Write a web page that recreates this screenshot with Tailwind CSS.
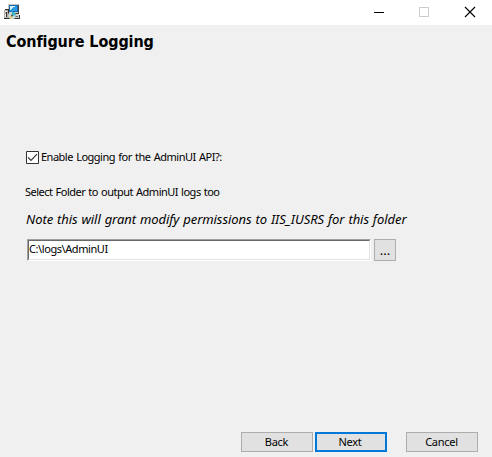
<!DOCTYPE html>
<html lang="en">
<head>
<meta charset="utf-8">
<title>Configure Logging</title>
<script src="https://cdn.jsdelivr.net/npm/@tailwindcss/browser@4"></script>
</head>
<body class="w-[492px] h-[457px] overflow-hidden bg-[#f0f0f0] flex flex-col font-['Noto_Sans',sans-serif] text-[11px] text-black whitespace-nowrap">
<header class="h-[25px] shrink-0 bg-white flex items-start justify-between pl-1">
  <svg class="w-4 h-4 mt-1" viewBox="0 0 16 16" fill="none" shape-rendering="crispEdges">
    <path d="M4 0h11v9H4z" fill="#c8c8c0"/><path d="M14 1h1v9H6V9h8z" fill="#444"/><path d="M5 1h9v7H5z" fill="#1464b4"/><path d="M6 2h7v5H6z" fill="#2b9be0"/><path d="M6 2h5v1H9v1H8v1H7v1H6z" fill="#d8f4ff"/>
    <path d="M8 10h7v4H8z" fill="#d0d0c8"/><path d="M9 14h7v1H9zM15 11h1v4h-1z" fill="#333"/><path d="M11 12h3v1h-3z" fill="#666"/>
    <path d="M0 6h5v9H0z" fill="#b0aca4"/><path d="M1 5h4v1H1zM4 6h1v4H4zM0 14h6v1H0zM2 8h1v5H2z" fill="#333"/><path d="M1 7h2v1H1zM1 10h1v3H1z" fill="#eee"/>
    <g shape-rendering="auto"><circle cx="8" cy="11.5" r="3.7" fill="#c5d8da"/><path d="M8 7.8a3.7 3.7 0 0 1 3.7 3.7H8z" fill="#35b8c8"/><path d="M4.8 13l3.2-1.5v3.7z" fill="#e8d070"/><circle cx="8" cy="11.5" r="1" fill="#555"/></g>
  </svg>
  <svg class="w-[132px] h-[25px]" viewBox="0 0 132 25" fill="none" shape-rendering="crispEdges">
    <path d="M14 12.5h10" stroke="#000"/><path d="M59.5 7.5h9v9h-9z" stroke="#ccc"/><path d="M105 7l10 10M115 7l-10 10" stroke="#000" shape-rendering="auto" stroke-width="1.1"/>
  </svg>
</header>
<main class="flex-1 flex flex-col">
  <h1 class="mt-[5px] ml-[6px] h-6 leading-6 font-['DejaVu_Sans_Condensed','DejaVu_Sans',sans-serif] font-bold text-[16px] tracking-[-0.1px]">Configure Logging</h1>
  <label class="mt-[95px] ml-[26px] h-4 flex items-center">
    <svg class="w-[13px] h-[13px] mr-[2px]" viewBox="0 0 13 13"><path d="M.5.5h12v12H.5z" fill="#fff" stroke="#333"/><path d="M2 6.3L5 9.3l6-6.2" fill="none" stroke="#333" stroke-width="1.2"/></svg>
    <span class="tracking-[-0.5px] [word-spacing:0.9px]">Enable Logging for the AdminUI API?:</span>
  </label>
  <p class="mt-[19px] ml-[25px] h-4 leading-4 tracking-[-0.5px] [word-spacing:0.7px]">Select Folder to output AdminUI logs too</p>
  <p class="mt-[10px] ml-[26px] h-[18px] leading-[18px] italic text-[13px] tracking-[-0.06px] [word-spacing:0.6px]">Note this will grant modify permissions to IIS_IUSRS for this folder</p>
  <div class="mt-[11px] ml-[27px] flex gap-[3px] h-[22px]">
    <div class="w-[344px] bg-white border border-t-[#a0a0a0] border-l-[#a0a0a0] border-r-white border-b-white">
      <div class="h-full border border-t-[#696969] border-l-[#696969] border-r-[#e3e3e3] border-b-[#e3e3e3] leading-4 tracking-[-0.42px]">C:\logs\AdminUI</div>
    </div>
    <button class="w-[22px] bg-[#e1e1e1] border border-[#adadad] text-[13px] leading-5">...</button>
  </div>
  <footer class="mt-auto mb-[5px] ml-[241px] flex h-5 tracking-[-0.25px]">
    <button class="w-[72px] bg-[#e1e1e1] border border-[#adadad] leading-[18px] pr-px">Back</button>
    <button class="w-[72px] ml-[2px] bg-[#e1e1e1] border-2 border-[#0078d7] leading-4 pr-[2px]">Next</button>
    <button class="w-[72px] ml-[19px] bg-[#e1e1e1] border border-[#adadad] leading-[18px] pr-px">Cancel</button>
  </footer>
</main>
</body>
</html>
